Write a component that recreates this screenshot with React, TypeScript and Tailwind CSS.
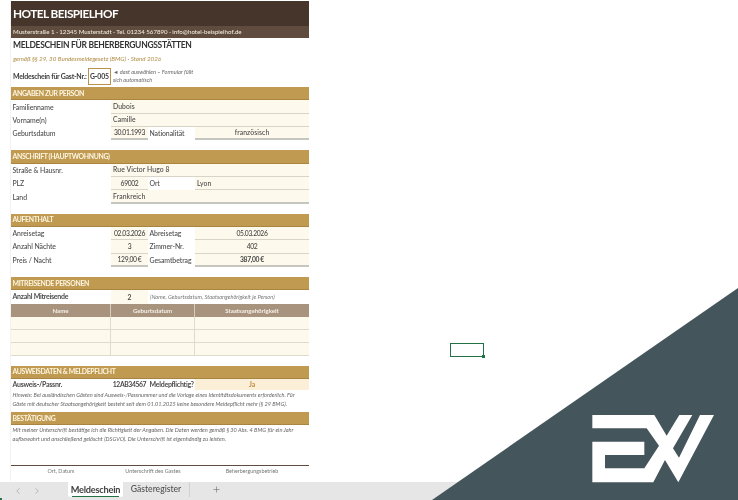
import { ChevronLeft, ChevronRight, Plus } from 'lucide-react';
import type { ReactNode } from 'react';

const GRID = 'grid grid-cols-[100px_37px_47px_114px] h-[13.33px] items-stretch';

function Section({ title }: { title: string }) {
  return (
    <div className="h-[13.33px] bg-[#c09a50] border-b border-[#a9863f] pl-[1.5px] flex items-center text-[6.9px] tracking-[-0.36px] font-bold text-[#fdf6e3] leading-none whitespace-nowrap">
      {title}
    </div>
  );
}

function Label({ children, bold }: { children: ReactNode; bold?: boolean }) {
  return (
    <div className={`flex items-center pl-[1.5px] text-[#4c4c4c] leading-none whitespace-nowrap ${bold ? 'text-[7px] tracking-[-0.26px] font-bold' : 'text-[6.9px] tracking-[-0.06px] font-medium'}`}>
      {children}
    </div>
  );
}

function Value({ children, center, last, bold, span, num }: { children?: ReactNode; center?: boolean; last?: boolean; bold?: boolean; span?: boolean; num?: boolean }) {
  return (
    <div
      className={`flex items-center bg-[#fdf9ec] text-[6.8px] text-[#484848] leading-none whitespace-nowrap border-b ${
        last ? 'border-b-2 border-[#c6c6c0]' : 'border-[#d8d5c8]'
      } ${num ? 'tracking-[-0.38px]' : 'tracking-[0.1px]'} ${center ? 'justify-center' : 'pl-[2px]'} ${bold ? 'font-bold' : 'font-medium'} ${span ? 'col-span-3' : ''}`}
    >
      {children}
    </div>
  );
}

function Spacer() {
  return <div className="h-[10px]" />;
}

function GuestRow() {
  return (
    <div className="grid grid-cols-[100px_84px_114px] h-[13px] bg-[#fdf9ec] border-b border-[#e0dccb]">
      <div className="border-r border-[#e0dccb]" />
      <div className="border-r border-[#e0dccb]" />
      <div />
    </div>
  );
}

export default function App() {
  return (
    <div className="relative w-[738px] h-[500px] overflow-hidden bg-white font-['Lato','Liberation_Sans',sans-serif]">
      {/* sheet */}
      <div className="w-[299px] ml-[10px] pt-px border-l border-[#f2f2f2] h-[481px] blur-[0.35px]">
        <div className="h-[25px] bg-[#46352a] flex items-center pl-[2px] text-[11.8px] tracking-[-0.55px] font-bold text-white">
          HOTEL BEISPIELHOF
        </div>
        <div className="h-[11.5px] bg-[#5f4c3e] flex items-center pl-[2px] text-[6.15px] text-[#f0e8dc] leading-none font-medium whitespace-nowrap">
          Musterstraße 1 · 12345 Musterstadt · Tel. 01234 567890 · info@hotel-beispielhof.de
        </div>
        <div className="h-[15px] flex items-center pl-[2px] text-[8.5px] font-bold text-[#333] tracking-[-0.3px] whitespace-nowrap">
          MELDESCHEIN FÜR BEHERBERGUNGSSTÄTTEN
        </div>
        <div className="h-[12.5px] flex items-center pl-[2px] text-[6.2px] italic text-[#b08d45] whitespace-nowrap">
          gemäß §§ 29, 30 Bundesmeldegesetz (BMG) · Stand 2026
        </div>
        <div className="h-[22px] flex items-center">
          <div className="w-[77px] pl-[2px] text-[7px] tracking-[-0.26px] font-bold text-[#3c3c3c] whitespace-nowrap">Meldeschein für Gast-Nr.:</div>
          <div className="w-[23px] h-[17px] border border-[#b8924a] flex items-center justify-center text-[6.9px] tracking-[-0.1px] font-bold text-[#3c3c3c] whitespace-nowrap">
            G-005
          </div>
          <div className="ml-[2px] w-[84px] text-[5.6px] italic text-[#666] leading-[8.2px]">
            ◄ dast auswählen – Formular füllt sich automatisch
          </div>
        </div>

        <Section title="ANGABEN ZUR PERSON" />
        <div className={GRID}>
          <Label>Familienname</Label>
          <Value span>Dubois</Value>
        </div>
        <div className={GRID}>
          <Label>Vorname(n)</Label>
          <Value span>Camille</Value>
        </div>
        <div className={GRID}>
          <Label>Geburtsdatum</Label>
          <Value center last num>30.01.1993</Value>
          <Label>Nationalität</Label>
          <Value center last>französisch</Value>
        </div>
        <Spacer />

        <Section title="ANSCHRIFT (HAUPTWOHNUNG)" />
        <div className={GRID}>
          <Label>Straße &amp; Hausnr.</Label>
          <Value span>Rue Victor Hugo 8</Value>
        </div>
        <div className={GRID}>
          <Label>PLZ</Label>
          <Value center num>69002</Value>
          <Label>Ort</Label>
          <Value>Lyon</Value>
        </div>
        <div className={GRID}>
          <Label>Land</Label>
          <Value span last>Frankreich</Value>
        </div>
        <Spacer />

        <Section title="AUFENTHALT" />
        <div className={GRID}>
          <Label>Anreisetag</Label>
          <Value center num>02.03.2026</Value>
          <Label>Abreisetag</Label>
          <Value center num>05.03.2026</Value>
        </div>
        <div className={GRID}>
          <Label>Anzahl Nächte</Label>
          <Value center num>3</Value>
          <Label>Zimmer-Nr.</Label>
          <Value center num>402</Value>
        </div>
        <div className={GRID}>
          <Label>Preis / Nacht</Label>
          <Value center last num>129,00 €</Value>
          <Label>Gesamtbetrag</Label>
          <Value center last bold num>387,00 €</Value>
        </div>
        <Spacer />

        <Section title="MITREISENDE PERSONEN" />
        <div className={GRID}>
          <Label bold>Anzahl Mitreisende</Label>
          <div className="flex items-center justify-center bg-[#fdf9ec] text-[6.8px] font-bold text-[#484848]">2</div>
          <div className="col-span-2 flex items-center pl-[2px] text-[5.65px] italic text-[#777] whitespace-nowrap">
            (Name, Geburtsdatum, Staatsangehörigkeit je Person)
          </div>
        </div>
        <div className="grid grid-cols-[100px_84px_114px] h-[13px] bg-[#a8937f] text-[6.1px] font-bold text-[#f6f0e6]">
          <div className="flex items-center justify-center border-r border-[#d6ccc0]">Name</div>
          <div className="flex items-center justify-center border-r border-[#d6ccc0]">Geburtsdatum</div>
          <div className="flex items-center justify-center">Staatsangehörigkeit</div>
        </div>
        <GuestRow />
        <GuestRow />
        <GuestRow />
        <Spacer />

        <Section title="AUSWEISDATEN & MELDEPFLICHT" />
        <div className="grid grid-cols-[100px_37px_47px_114px] h-[11px] items-stretch">
          <Label bold>Ausweis-/Passnr.</Label>
          <div className="flex items-center justify-center text-[6.8px] font-bold text-[#484848] tracking-[-0.38px] whitespace-nowrap">12AB34567</div>
          <Label bold>Meldepflichtig?</Label>
          <div className="flex items-center justify-center bg-[#fbefd8] text-[6.8px] font-bold text-[#c08a3c]">Ja</div>
        </div>
        <div className="h-[22px] pl-[1.5px] pr-[10px] pt-[1px] text-[5.6px] italic text-[#666] leading-[8.6px]">
          Hinweis: Bei ausländischen Gästen sind Ausweis-/Passnummer und die Vorlage eines Identitätsdokuments erforderlich. Für Gäste mit deutscher Staatsangehörigkeit besteht seit dem 01.01.2025 keine besondere Meldepflicht mehr (§ 29 BMG).
        </div>
        <Section title="BESTÄTIGUNG" />
        <div className="h-[39.5px] pl-[1.5px] pt-[1px] text-[5.65px] italic text-[#666] leading-[8.4px]">
          Mit meiner Unterschrift bestätige ich die Richtigkeit der Angaben. Die Daten werden gemäß § 30 Abs. 4 BMG für ein Jahr aufbewahrt und anschließend gelöscht (DSGVO). Die Unterschrift ist eigenhändig zu leisten.
        </div>
        <div className="grid grid-cols-[100px_84px_114px] h-[11px] border-t-[1.5px] border-[#5f4c3e] text-[5.4px] text-[#777]">
          <div className="flex items-center justify-center">Ort, Datum</div>
          <div className="flex items-center justify-center">Unterschrift des Gastes</div>
          <div className="flex items-center justify-center">Beherbergungsbetrieb</div>
        </div>
      </div>

      {/* sheet tabs */}
      <div className="absolute left-0 right-0 bottom-0 h-[18px] bg-[#e6e6e6] flex items-start text-[#444] blur-[0.3px]">
        <div className="w-[68px] h-[15px] flex items-center pl-[13px] gap-[9px] text-[#9a9a9a] mt-[1px]">
          <ChevronLeft size={10} strokeWidth={1.5} />
          <ChevronRight size={10} strokeWidth={1.5} />
        </div>
        <div className="relative w-[55px] h-[15px] bg-white rounded-b-[2px] flex items-center justify-center text-[9.2px] tracking-[-0.2px] font-bold text-[#404040]">
          Meldeschein
          <div className="absolute left-[4px] right-[4px] bottom-0 h-[1.5px] bg-[#217346]" />
        </div>
        <div className="w-[67px] h-[15px] flex items-center justify-center text-[8.6px] font-medium text-[#505050] border-r border-[#d0d0d0]">
          Gästeregister
        </div>
        <div className="ml-[22px] h-[15px] flex items-center text-[#666]">
          <Plus size={9} strokeWidth={1.5} />
        </div>
        <div className="absolute left-0 bottom-0 w-[2px] h-[2px] bg-[#217346]" />
      </div>

      {/* selected cell */}
      <div className="absolute left-[450px] top-[343px] w-[34px] h-[14px] border border-[#217346]">
        <div className="absolute -right-[2px] -bottom-[2px] w-[3px] h-[3px] bg-[#217346]" />
      </div>

      {/* corner logo */}
      <svg className="absolute left-[432px] top-[288px]" width="306" height="212" viewBox="0 0 306 212">
        <path d="M0 212 L306 0 V212 Z" fill="#44555c" />
        <g transform="translate(153 117) scale(0.3333)">
          <path
            d="M22 30 H208 L245 92 L283 30 H322 L264 130 L282 158 L345 30 H387 L280 232 L240 165 L205 232 H22 V110 H178 V150 H60 V190 H178 L222 122 L185 70 H22 Z"
            fill="#ffffff"
          />
        </g>
      </svg>
    </div>
  );
}
